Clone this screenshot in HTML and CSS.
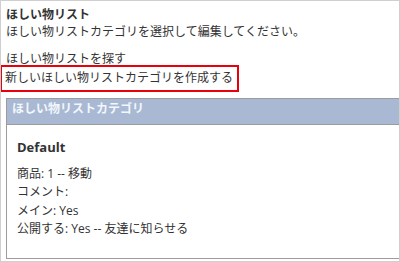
FILE: index.html
```html
<!DOCTYPE html>
<html lang="ja">
<head>
<meta charset="utf-8">
<title>ほしい物リスト</title>
<link rel="stylesheet" href="styles.css">
</head>
<body>
<div class="frame">
  <div class="title">ほしい物リスト</div>
  <div class="subtitle">ほしい物リストカテゴリを選択して編集してください。</div>
  <div class="link-find">ほしい物リストを探す</div>
  <div class="link-new">新しいほしい物リストカテゴリを作成する</div>
  <div class="box">
    <div class="box-head">ほしい物リストカテゴリ</div>
    <div class="box-body">
      <div class="cat-name">Default</div>
      <div class="row">商品: 1 -- 移動</div>
      <div class="row">コメント:</div>
      <div class="row">メイン: Yes</div>
      <div class="row">公開する: Yes -- 友達に知らせる</div>
    </div>
  </div>
</div>
</body>
</html>
```

FILE: styles.css
```css
html, body {
  margin: 0;
  padding: 0;
  background: #fff;
}
body {
  font-family: "Open Sans", "Noto Sans CJK JP", sans-serif;
  font-size: 12px;
  color: #333;
}
.frame {
  width: 400px;
  height: 262px;
  box-sizing: border-box;
  border: 1px solid #cfcfcf;
  padding: 5px 0 2px 5px;
  display: flex;
  flex-direction: column;
  overflow: hidden;
}
.title {
  font-weight: bold;
  line-height: 17px;
}
.subtitle {
  line-height: 18px;
}
.link-find {
  margin-top: 10px;
  line-height: 16px;
}
.link-new {
  width: fit-content;
  margin-left: -4px;
  padding: 1px 4px 3px 3px;
  line-height: 19px;
  outline: 2px solid #e8000b;
}
.box {
  flex: 1;
  margin-top: 8px;
  margin-right: -3px;
  border: 1px solid #9c9c9c;
  display: flex;
  flex-direction: column;
}
.box-head {
  background: #a9b9d3;
  color: #f3f6fb;
  font-weight: bold;
  line-height: 18px;
  padding: 1px 5px 6px;
  border-bottom: 1px solid #9c9c9c;
}
.box-body {
  padding: 13px 10px 0;
}
.cat-name {
  font-weight: bold;
  font-size: 13px;
  line-height: 18px;
  margin-bottom: 9px;
}
.row {
  line-height: 18.4px;
}
```
